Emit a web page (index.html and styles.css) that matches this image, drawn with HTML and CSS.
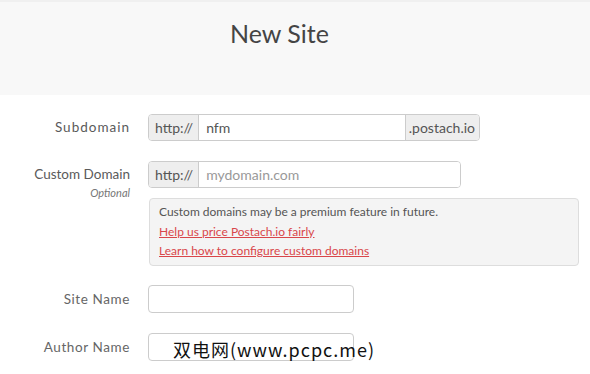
FILE: index.html
```html
<!DOCTYPE html>
<html lang="en">
<head>
    <meta charset="UTF-8">
    <title>New Site</title>
    <link rel="stylesheet" href="styles.css">
</head>
<body>
    <div class="header">
        <h1>New Site</h1>
    </div>

    <form class="form">
        <!-- Subdomain -->
        <div class="row">
            <label class="label spaced">Subdomain</label>
            <div class="group wide">
                <span class="addon">http://</span>
                <input type="text" class="field" value="nfm">
                <span class="addon right">.postach.io</span>
            </div>
        </div>

        <!-- Custom Domain -->
        <div class="row custom">
            <div class="label">Custom Domain<em>Optional</em></div>
            <div class="control">
                <div class="group medium">
                    <span class="addon">http://</span>
                    <input type="text" class="field" placeholder="mydomain.com">
                </div>
                <div class="help">
                    <p>Custom domains may be a premium feature in future.</p>
                    <a href="#">Help us price Postach.io fairly</a>
                    <a href="#">Learn how to configure custom domains</a>
                </div>
            </div>
        </div>

        <div class="row">
            <label class="label half">Site Name</label>
            <input type="text" class="field single">
        </div>

        <div class="row">
            <label class="label half">Author Name</label>
            <input type="text" class="field single">
        </div>
    </form>

    <div class="watermark">双电网(www.pcpc.me)</div>
</body>
</html>
```

FILE: styles.css
```css
body {
    margin: 0;
    font-family: Lato, "Noto Sans", sans-serif;
    color: #555;
    background: #fff;
    position: relative;
    height: 374px;
    overflow: hidden;
}
.header {
    height: 95px;
    background: #f8f8f8;
    border-top: 2px solid #f0f0f0;
    box-sizing: border-box;
}
.header h1 {
    margin: 0;
    padding: 16px 0 0 230px;
    font-size: 25px;
    font-weight: 400;
    color: #444;
}
.form {
    padding-top: 19px;
}
.row {
    display: flex;
    align-items: flex-start;
    margin-bottom: 20px;
}
.row.custom {
    margin-bottom: 19px;
}
.label {
    width: 130px;
    margin-right: 18px;
    text-align: right;
    font-size: 13.5px;
    line-height: 27px;
    color: #5a5a5a;
}
.label.spaced {
    letter-spacing: 1px;
}
.label.half {
    letter-spacing: 0.6px;
    line-height: 28px;
    color: #666;
}
.label em {
    display: block;
    font-size: 11px;
    line-height: 10px;
    color: #777;
    margin-top: 0;
}
.group {
    display: flex;
    height: 27px;
    border: 1px solid #ccc;
    border-radius: 4px;
    box-sizing: border-box;
    overflow: hidden;
    background: #fff;
}
.group.wide {
    width: 332px;
}
.group.medium {
    width: 313px;
}
.addon {
    background: #eee;
    padding: 0 5px 0 6px;
    font-size: 14px;
    line-height: 25px;
    color: #555;
    border-right: 1px solid #ccc;
}
.addon.right {
    border-right: none;
    border-left: 1px solid #ccc;
    padding: 0 4px 0 3px;
}
.field {
    flex: 1;
    min-width: 0;
    border: none;
    outline: none;
    padding: 0 7px;
    font-family: inherit;
    font-size: 14px;
    color: #555;
    background: #fff;
}
.field::placeholder {
    color: #999;
}
.field.single {
    flex: none;
    width: 206px;
    height: 28px;
    border: 1px solid #ccc;
    border-radius: 4px;
    box-sizing: border-box;
}
.help {
    width: 430px;
    height: 68px;
    margin-top: 10px;
    margin-left: 1px;
    box-sizing: border-box;
    padding: 3px 9px 0 9px;
    background: #f4f4f4;
    border: 1px solid #ddd;
    border-radius: 4px;
    font-size: 12px;
    line-height: 19.5px;
}
.help p {
    margin: 0;
    color: #555;
}
.help a {
    display: block;
    color: #d9464a;
}
.watermark {
    position: absolute;
    left: 173px;
    top: 336px;
    font-family: "Noto Sans CJK SC", sans-serif;
    font-size: 18px;
    color: #111;
    letter-spacing: 1px;
}
```
